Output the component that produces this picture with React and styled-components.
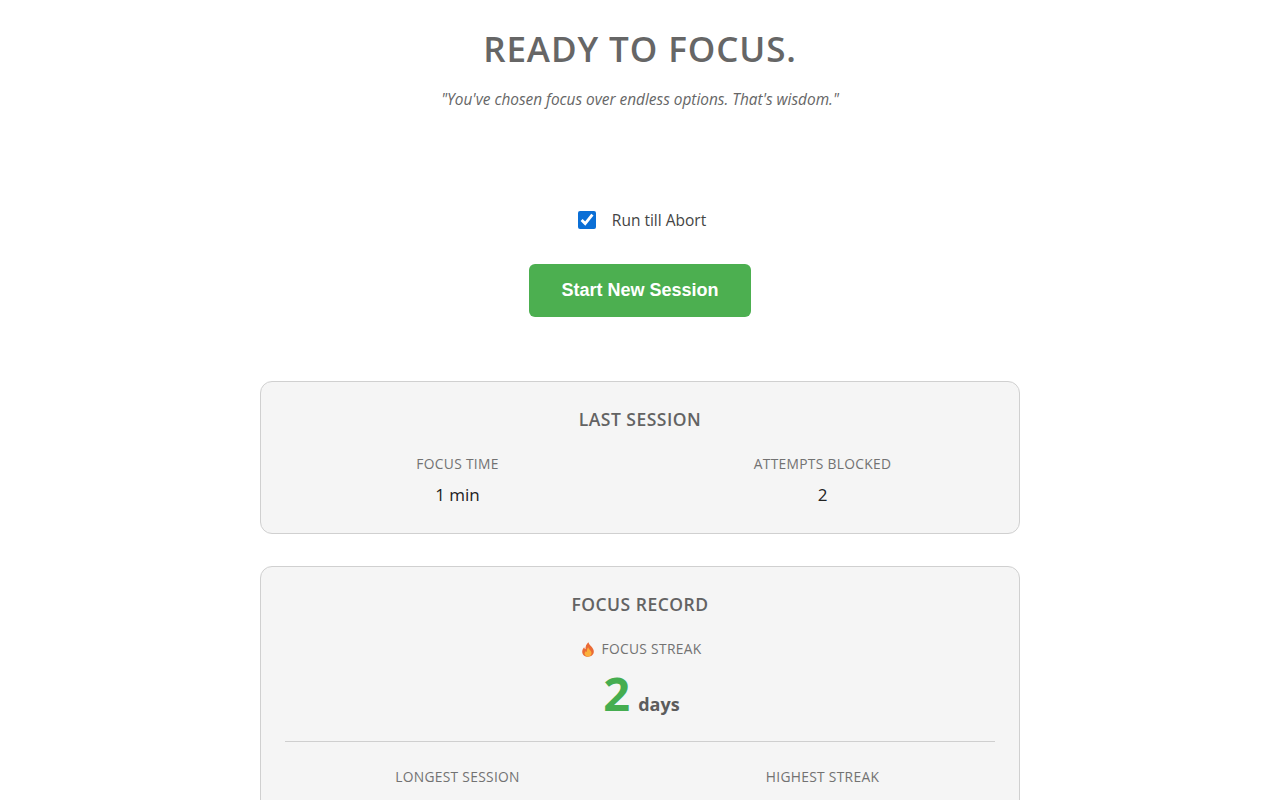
import styled, { createGlobalStyle } from 'styled-components'

const GlobalStyle = createGlobalStyle`
html, body {
    margin: 0;
    padding: 0;
    background: #fff;
    overflow-x: hidden;
    scrollbar-width: none;
}
body {
    font-family: "Open Sans", "Noto Sans", "Liberation Sans", sans-serif;
}
`

const Page = styled.div`
width: 760px;
margin: 0 auto;
display: flex;
flex-direction: column;
align-items: center;
`
const Title = styled.h1`
margin: 26px 0 0;
font-size: 35px;
line-height: 46px;
font-weight: 600;
letter-spacing: 0.9px;
color: #666;
`
const Quote = styled.p`
margin: 16px 0 0;
font-size: 15.4px;
line-height: 24px;
font-style: italic;
font-weight: 400;
color: #666;
`
const CheckRow = styled.label`
margin-top: 96px;
padding-left: 4px;
display: flex;
align-items: center;
gap: 16px;
font-size: 15.5px;
line-height: 24px;
color: #444;
`
const CheckBox = styled.input`
width: 18px;
height: 18px;
margin: 0;
accent-color: #0b6fd6;
`
const StartButton = styled.button`
margin-top: 32px;
width: 222px;
height: 53px;
border: none;
border-radius: 6px;
background: #4caf50;
color: #fff;
font-family: "Liberation Sans", Arial, sans-serif;
font-size: 18px;
font-weight: 700;
cursor: pointer;
`
const Card = styled.section`
box-sizing: border-box;
width: 760px;
margin-top: ${props => props.$top}px;
padding: 23px 24px 26px;
background: #f5f5f5;
border: 1px solid #d0d0d0;
border-radius: 12px;
display: flex;
flex-direction: column;
align-items: center;
`
const CardTitle = styled.h2`
margin: 0;
font-size: 17.5px;
line-height: 28px;
font-weight: 600;
letter-spacing: 0.5px;
color: #636363;
`
const StatRow = styled.div`
width: 100%;
margin-top: ${props => props.$top}px;
display: grid;
grid-template-columns: 1fr 1fr;
column-gap: 20px;
`
const Stat = styled.div`
display: flex;
flex-direction: column;
align-items: center;
`
const StatLabel = styled.div`
display: flex;
align-items: center;
gap: 8px;
font-size: 13.8px;
line-height: 20px;
letter-spacing: 0.3px;
color: #727272;
`
const StatValue = styled.div`
margin-top: 9px;
font-size: 17px;
line-height: 24px;
color: #222;
`
const Streak = styled.div`
margin-top: 21px;
padding-left: 3px;
display: flex;
flex-direction: column;
align-items: center;
`
const StreakValue = styled.div`
display: flex;
align-items: baseline;
gap: 8px;
margin-top: 5px;
height: 58px;
`
const StreakNumber = styled.span`
font-size: 47px;
line-height: 58px;
font-weight: 700;
color: #45ad50;
`
const StreakUnit = styled.span`
font-size: 18px;
font-weight: 700;
color: #5c5c5c;
`
const Divider = styled.hr`
width: 100%;
margin: 19px 0 0;
border: none;
border-top: 1px solid #cfcfcf;
`

function Flame() {
    return (
        <svg width="12" height="15" viewBox="0 0 12 15">
            <path d="M6.4 0.3C6.9 2.4 8.3 3.2 9.6 4.8 11 6.4 11.8 8 11.8 9.6 11.8 12.8 9.3 14.8 6 14.8 2.7 14.8 0.2 12.8 0.2 9.8 0.2 7.8 1.1 6.3 2.1 5.2 2.3 6.2 2.8 6.9 3.5 7.2 3.3 4.6 4.4 2 6.4 0.3Z" fill="#ea6a35" />
            <path d="M6.2 5.2C6.5 6.8 7.8 7.6 8.7 9 9.4 10.1 9.7 11 9.4 12 9 13.6 7.5 14.6 6 14.6 4.4 14.6 2.9 13.5 2.6 12 2.5 10.8 3.1 9.7 3.9 8.9 4.1 9.5 4.4 9.9 4.9 10.1 4.8 8.3 5.2 6.5 6.2 5.2Z" fill="#fbb03b" />
        </svg>
    )
}

export default function App() {
    return (
        <Page>
            <GlobalStyle />
            <Title>READY TO FOCUS.</Title>
            <Quote>"You've chosen focus over endless options. That's wisdom."</Quote>
            <CheckRow>
                <CheckBox type="checkbox" defaultChecked />
                Run till Abort
            </CheckRow>
            <StartButton>Start New Session</StartButton>
            <Card $top={64}>
                <CardTitle>LAST SESSION</CardTitle>
                <StatRow $top={21}>
                    <Stat>
                        <StatLabel>FOCUS TIME</StatLabel>
                        <StatValue>1 min</StatValue>
                    </Stat>
                    <Stat>
                        <StatLabel>ATTEMPTS BLOCKED</StatLabel>
                        <StatValue>2</StatValue>
                    </Stat>
                </StatRow>
            </Card>
            <Card $top={32}>
                <CardTitle>FOCUS RECORD</CardTitle>
                <Streak>
                    <StatLabel><Flame />FOCUS STREAK</StatLabel>
                    <StreakValue>
                        <StreakNumber>2</StreakNumber>
                        <StreakUnit>days</StreakUnit>
                    </StreakValue>
                </Streak>
                <Divider />
                <StatRow $top={25}>
                    <Stat><StatLabel>LONGEST SESSION</StatLabel></Stat>
                    <Stat><StatLabel>HIGHEST STREAK</StatLabel></Stat>
                </StatRow>
            </Card>
        </Page>
    )
}
